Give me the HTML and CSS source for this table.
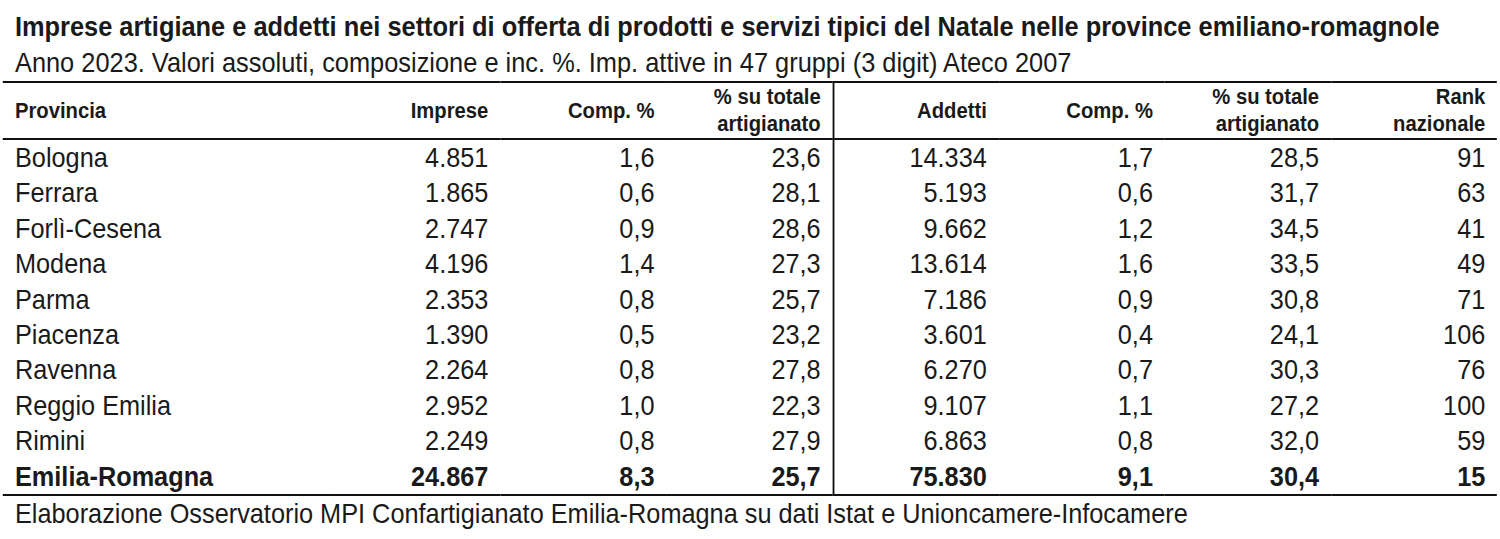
FILE: index.html
```html
<!DOCTYPE html>
<html lang="it">
<head>
<meta charset="utf-8">
<title>Imprese artigiane Natale Emilia-Romagna</title>
<link rel="stylesheet" href="styles.css">
</head>
<body>
<div class="frame">
<div class="sheet">
  <h1 class="title">Imprese artigiane e addetti nei settori di offerta di prodotti e servizi tipici del Natale nelle province emiliano-romagnole</h1>
  <p class="subtitle">Anno 2023. Valori assoluti, composizione e inc. %. Imp. attive in 47 gruppi (3 digit) Ateco 2007</p>
  <table class="data">
    <colgroup>
      <col class="c-prov"><col class="c-num"><col class="c-num"><col class="c-num"><col class="c-num"><col class="c-num"><col class="c-num"><col class="c-num">
    </colgroup>
    <thead>
      <tr>
        <th class="left">Provincia</th>
        <th>Imprese</th>
        <th>Comp. %</th>
        <th>% su totale<br>artigianato</th>
        <th class="sep">Addetti</th>
        <th>Comp. %</th>
        <th>% su totale<br>artigianato</th>
        <th>Rank<br>nazionale</th>
      </tr>
    </thead>
    <tbody>
      <tr><td class="left">Bologna</td><td>4.851</td><td>1,6</td><td>23,6</td><td class="sep">14.334</td><td>1,7</td><td>28,5</td><td>91</td></tr>
      <tr><td class="left">Ferrara</td><td>1.865</td><td>0,6</td><td>28,1</td><td class="sep">5.193</td><td>0,6</td><td>31,7</td><td>63</td></tr>
      <tr><td class="left">Forlì-Cesena</td><td>2.747</td><td>0,9</td><td>28,6</td><td class="sep">9.662</td><td>1,2</td><td>34,5</td><td>41</td></tr>
      <tr><td class="left">Modena</td><td>4.196</td><td>1,4</td><td>27,3</td><td class="sep">13.614</td><td>1,6</td><td>33,5</td><td>49</td></tr>
      <tr><td class="left">Parma</td><td>2.353</td><td>0,8</td><td>25,7</td><td class="sep">7.186</td><td>0,9</td><td>30,8</td><td>71</td></tr>
      <tr><td class="left">Piacenza</td><td>1.390</td><td>0,5</td><td>23,2</td><td class="sep">3.601</td><td>0,4</td><td>24,1</td><td>106</td></tr>
      <tr><td class="left">Ravenna</td><td>2.264</td><td>0,8</td><td>27,8</td><td class="sep">6.270</td><td>0,7</td><td>30,3</td><td>76</td></tr>
      <tr><td class="left">Reggio Emilia</td><td>2.952</td><td>1,0</td><td>22,3</td><td class="sep">9.107</td><td>1,1</td><td>27,2</td><td>100</td></tr>
      <tr><td class="left">Rimini</td><td>2.249</td><td>0,8</td><td>27,9</td><td class="sep">6.863</td><td>0,8</td><td>32,0</td><td>59</td></tr>
      <tr class="total"><td class="left">Emilia-Romagna</td><td>24.867</td><td>8,3</td><td>25,7</td><td class="sep">75.830</td><td>9,1</td><td>30,4</td><td>15</td></tr>
    </tbody>
  </table>
  <p class="source">Elaborazione Osservatorio MPI Confartigianato Emilia-Romagna su dati Istat e Unioncamere-Infocamere</p>
</div>
</div>
</body>
</html>
```

FILE: styles.css
```css
* { box-sizing: border-box; }
html, body { margin: 0; padding: 0; background: #fff; }
body {
  font-family: "Liberation Sans", Arial, sans-serif;
  color: #1a1a1a;
  overflow: hidden;
}
.frame {
  width: 1500px;
  overflow: hidden;
}
/* The source uses a condensed face; emulate it by narrowing the whole sheet */
.sheet {
  width: 1627px;
  padding: 9px 0 0 3.26px;
  transform: scaleX(0.92);
  transform-origin: 0 0;
}
.title {
  margin: 0;
  padding-left: 13px;
  font-size: 27.6px;
  line-height: 36px;
  font-weight: bold;
  white-space: nowrap;
}
.subtitle {
  margin: 0;
  padding-left: 13px;
  font-size: 27.6px;
  line-height: 36px;
  font-weight: normal;
  white-space: nowrap;
}
.data {
  border-collapse: separate;
  border-spacing: 0;
  table-layout: fixed;
  width: 1624.2px;
}
.c-prov { width: 360px; }
.c-num { width: 180.6px; }
th, td {
  padding: 0 13px 0 0;
  text-align: right;
  white-space: nowrap;
}
th {
  font-size: 22px;
  line-height: 27px;
  font-weight: bold;
  vertical-align: middle;
  padding-bottom: 1px;
  border-top: 2px solid #111;
  border-bottom: 2px solid #111;
}
td {
  font-size: 27.5px;
  line-height: 34.4px;
  padding-top: 1px;
}
.left { text-align: left; padding-left: 13px; }
.sep { border-left: 2px solid #111; }
.total td {
  font-weight: bold;
  border-bottom: 2px solid #111;
}
.source {
  margin: 0;
  padding-left: 13px;
  font-size: 27.5px;
  line-height: 35.5px;
  white-space: nowrap;
}
```
